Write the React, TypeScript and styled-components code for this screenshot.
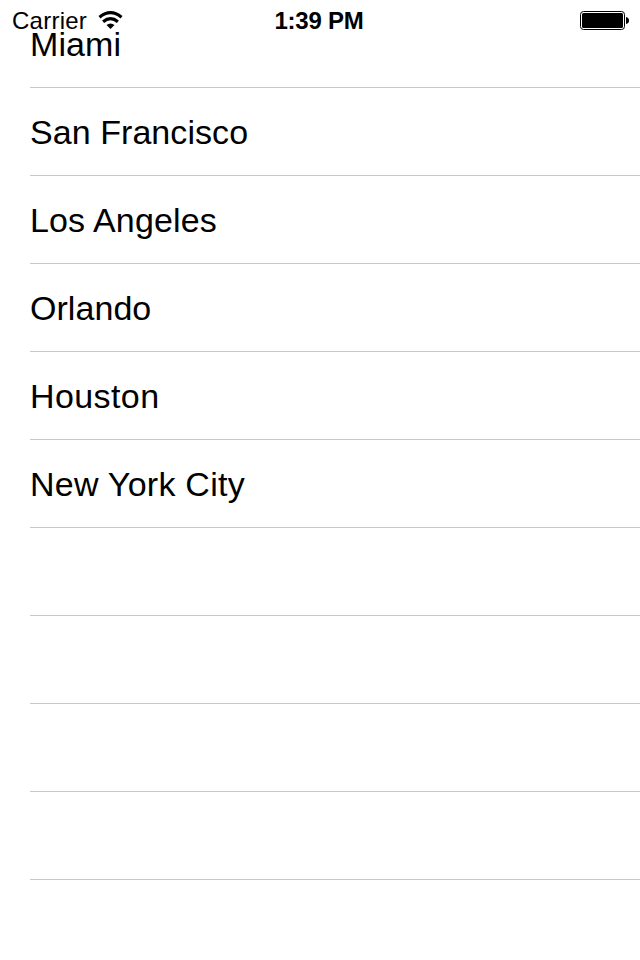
import React from "react";
import styled, { createGlobalStyle } from "styled-components";

const GlobalStyle = createGlobalStyle`
  body { margin: 0; background: #fff; }
`;

const Screen = styled.main`
  position: relative;
  width: 640px;
  height: 960px;
  overflow: hidden;
  background: #fff;
  color: #000;
  font-family: "Liberation Sans", Arial, sans-serif;
`;

const StatusBar = styled.header`
  position: absolute;
  inset: 0 0 auto 0;
  z-index: 1;
  height: 41px;
  box-sizing: border-box;
  padding: 0 11px 0 12px;
  display: grid;
  grid-template-columns: 1fr auto 1fr;
  align-items: center;
`;

const Network = styled.div`
  display: flex;
  align-items: center;
  gap: 10px;
`;

const StatusText = styled.span<{ $bold?: boolean; $width: number }>`
  width: ${({ $width }) => $width}px;
  font-size: 24px;
  line-height: 41px;
  font-weight: ${({ $bold }) => ($bold ? 700 : 400)};
  letter-spacing: ${({ $bold }) => ($bold ? "-0.25px" : "0.25px")};
  white-space: nowrap;
`;

const WifiIcon = styled.svg`
  width: 25px;
  height: 19px;
`;

const BatteryIcon = styled.svg`
  justify-self: end;
  width: 49px;
  height: 19px;
`;

const CityList = styled.ul`
  margin: 0;
  padding: 0 0 0 30px;
  list-style: none;
`;

const CityRow = styled.li`
  height: 88px;
  box-sizing: border-box;
  border-bottom: 1px solid #c8c8c8;
  display: flex;
  align-items: center;
`;

const CityName = styled.span<{ $spacing: number }>`
  font-size: 34px;
  line-height: 40px;
  letter-spacing: ${({ $spacing }) => $spacing}px;
  white-space: nowrap;
`;

const cities = [
  { name: "Miami", spacing: 0.1 },
  { name: "San Francisco", spacing: 0.06 },
  { name: "Los Angeles", spacing: 0.15 },
  { name: "Orlando", spacing: 0.05 },
  { name: "Houston", spacing: 0.4 },
  { name: "New York City", spacing: 0.25 },
  { name: "", spacing: 0 },
  { name: "", spacing: 0 },
  { name: "", spacing: 0 },
  { name: "", spacing: 0 },
];

export default function App() {
  return (
    <Screen>
      <GlobalStyle />
      <StatusBar>
        <Network>
          <StatusText $width={76}>Carrier</StatusText>
          <WifiIcon viewBox="0 0 25 19" fill="none" stroke="#000" strokeWidth="3.2">
            <path d="M1.5 6.2Q12.5-2.8 23.5 6.2M5.1 10.7Q12.5 4.7 19.9 10.7" />
            <path d="M8.5 14Q12.5 11 16.5 14L12.5 18Z" fill="#000" stroke="none" />
          </WifiIcon>
        </Network>
        <StatusText $bold $width={92}>1:39 PM</StatusText>
        <BatteryIcon viewBox="0 0 49 19">
          <rect x=".5" y=".5" width="44" height="18" rx="3" fill="none" stroke="#000" />
          <rect x="2" y="2" width="41" height="15" rx="1.5" />
          <path d="M46 6Q49 6.5 49 9.5Q49 12.5 46 13Z" />
        </BatteryIcon>
      </StatusBar>
      <CityList>
        {cities.map((city, index) => (
          <CityRow key={index}>
            <CityName $spacing={city.spacing}>{city.name}</CityName>
          </CityRow>
        ))}
      </CityList>
    </Screen>
  );
}
